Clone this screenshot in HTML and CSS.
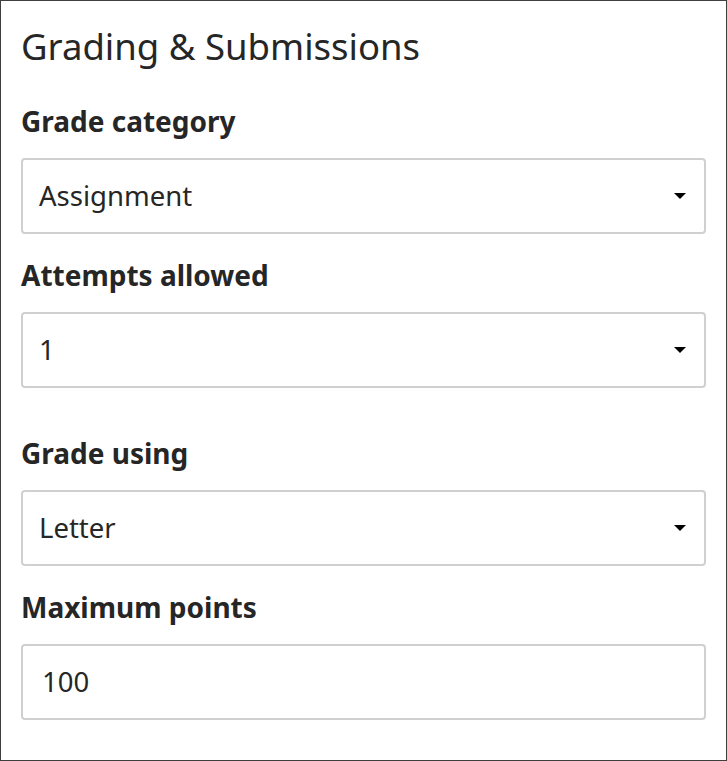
FILE: index.html
```html
<!DOCTYPE html>
<html lang="en">
<head>
<meta charset="utf-8">
<title>Grading &amp; Submissions</title>
<link rel="stylesheet" href="styles.css">
</head>
<body>
<section class="panel">
  <h2 class="title">Grading &amp; Submissions</h2>
  <div class="field field-first">
    <label class="label">Grade category</label>
    <div class="select"><span class="value">Assignment</span><span class="caret"></span></div>
  </div>
  <div class="field">
    <label class="label">Attempts allowed</label>
    <div class="select"><span class="value">1</span><span class="caret"></span></div>
  </div>
  <div class="field field-spaced">
    <label class="label">Grade using</label>
    <div class="select"><span class="value">Letter</span><span class="caret"></span></div>
  </div>
  <div class="field">
    <label class="label">Maximum points</label>
    <div class="input"><span class="value value-input">100</span></div>
  </div>
</section>
</body>
</html>
```

FILE: styles.css
```css
html, body {
  margin: 0;
  padding: 0;
  background: #fff;
}
.panel {
  box-sizing: border-box;
  width: 727px;
  height: 761px;
  border: 1px solid #3f3f3f;
  padding: 20px 20px 0 20px;
  font-family: "Noto Sans", "Open Sans", sans-serif;
  color: #262626;
}
.title {
  margin: 0;
  font-weight: 400;
  font-size: 36.5px;
  line-height: 50px;
}
.field {
  display: flex;
  flex-direction: column;
  margin-top: 23px;
}
.field-first {
  margin-top: 32px;
}
.field-spaced {
  margin-top: 47px;
}
.label {
  font-weight: 700;
  font-size: 28px;
  line-height: 36px;
  margin-bottom: 19px;
}
.select, .input {
  box-sizing: border-box;
  height: 76px;
  border: 2px solid #d0d0d0;
  border-radius: 4px;
  display: flex;
  align-items: center;
  justify-content: space-between;
  padding: 0 18px 0 16px;
}
.value {
  font-size: 27.5px;
  color: #262626;
  margin-bottom: 1px;
}
.value-input {
  padding-left: 3px;
}
.caret {
  width: 0;
  height: 0;
  border-left: 6px solid transparent;
  border-right: 6px solid transparent;
  border-top: 6px solid #000;
}
```
